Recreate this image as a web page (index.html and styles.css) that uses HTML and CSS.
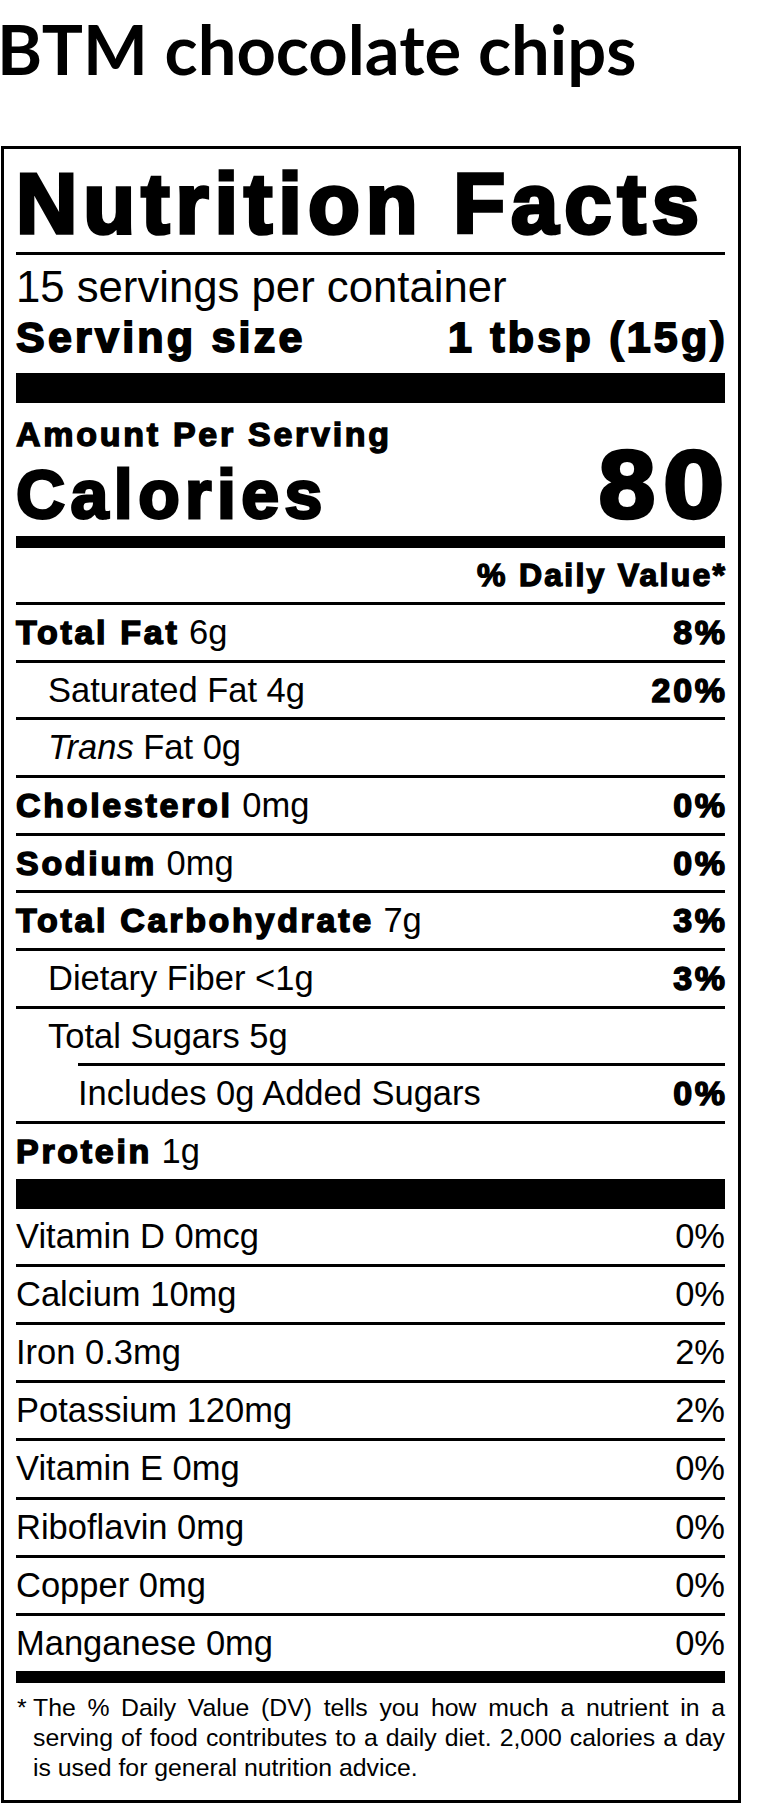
FILE: index.html
```html
<!DOCTYPE html>
<html lang="en">
<head>
<meta charset="utf-8">
<title>BTM chocolate chips</title>
<link rel="stylesheet" href="styles.css">
</head>
<body>
<h1 class="title">BTM chocolate chips</h1>
<section class="label">
  <h2 class="nf-title">Nutrition Facts</h2>
  <p class="servings">15 servings per container</p>
  <div class="serving-size"><span>Serving size</span><span class="end">1 tbsp (15g)</span></div>
  <div class="bar bar-thick"></div>
  <p class="amount">Amount Per Serving</p>
  <div class="calories"><span class="cal-label">Calories</span><span class="cal-value">80</span></div>
  <div class="bar bar-mid"></div>
  <p class="dv-head"><span class="end">% Daily Value*</span></p>

  <div class="row"><span><b class="b">Total Fat</b> 6g</span><b class="b pct">8%</b></div>
  <div class="row sub"><span>Saturated Fat 4g</span><b class="b pct">20%</b></div>
  <div class="row sub"><span><i>Trans</i> Fat 0g</span></div>
  <div class="row"><span><b class="b">Cholesterol</b> 0mg</span><b class="b pct">0%</b></div>
  <div class="row"><span><b class="b">Sodium</b> 0mg</span><b class="b pct">0%</b></div>
  <div class="row"><span><b class="b">Total Carbohydrate</b> 7g</span><b class="b pct">3%</b></div>
  <div class="row sub"><span>Dietary Fiber &lt;1g</span><b class="b pct">3%</b></div>
  <div class="row sub"><span>Total Sugars 5g</span></div>
  <div class="row subsub"><span>Includes 0g Added Sugars</span><b class="b pct">0%</b></div>
  <div class="row"><span><b class="b">Protein</b> 1g</span></div>
  <div class="bar bar-thick"></div>

  <div class="vrow"><span>Vitamin D 0mcg</span><span>0%</span></div>
  <div class="vrow"><span>Calcium 10mg</span><span>0%</span></div>
  <div class="vrow"><span>Iron 0.3mg</span><span>2%</span></div>
  <div class="vrow"><span>Potassium 120mg</span><span>2%</span></div>
  <div class="vrow"><span>Vitamin E 0mg</span><span>0%</span></div>
  <div class="vrow"><span>Riboflavin 0mg</span><span>0%</span></div>
  <div class="vrow"><span>Copper 0mg</span><span>0%</span></div>
  <div class="vrow"><span>Manganese 0mg</span><span>0%</span></div>
  <div class="bar bar-mid"></div>

  <div class="foot">
    <span class="star">*</span>
    <p class="foot-text">The % Daily Value (DV) tells you how much a nutrient in a serving of food contributes to a daily diet. 2,000 calories a day is used for general nutrition advice.</p>
  </div>
</section>
</body>
</html>
```

FILE: styles.css
```css
body {
  margin: 0;
  background: #fff;
  color: #000;
}

.title {
  font-family: Lato, "Liberation Sans", sans-serif;
  font-weight: 700;
  font-size: 68.7px;
  line-height: 84px;
  margin: 7px 0 55px 0;
  text-indent: -3px;
}

.label {
  margin-left: 1px;
  width: 740px;
  box-sizing: border-box;
  border: 3px solid #000;
  padding: 0 13px 0 12px;
  font-family: "Liberation Sans", Arial, sans-serif;
}

.label p { margin: 0; }

.nf-title {
  margin: 0;
  padding-top: 6px;
  font-size: 85px;
  line-height: 97px;
  font-weight: 700;
  letter-spacing: 0.07em;
  -webkit-text-stroke: 3.6px #000;
  border-bottom: 3px solid #000;
  white-space: nowrap;
}

.servings {
  font-size: 43.7px;
  line-height: 48px;
  padding-top: 8px;
}

.serving-size {
  display: flex;
  justify-content: space-between;
  font-size: 43px;
  line-height: 52px;
  font-weight: 700;
  letter-spacing: 0.075em;
  -webkit-text-stroke: 1.8px #000;
}

.end { margin-right: -0.07em; }

.bar { background: #000; }
.bar-thick { height: 30px; margin-top: 10px; }
.row + .bar-thick { margin-top: 0; }
.bar-mid { height: 12px; }

.amount {
  padding-top: 13px;
  font-size: 34px;
  line-height: 36px;
  font-weight: 700;
  letter-spacing: 0.08em;
  -webkit-text-stroke: 1.4px #000;
}

.calories {
  display: flex;
  justify-content: space-between;
  align-items: baseline;
  height: 84px;
}

.cal-label {
  font-size: 68px;
  line-height: 68px;
  font-weight: 700;
  letter-spacing: 0.08em;
  -webkit-text-stroke: 2.8px #000;
}

.cal-value {
  font-family: "DejaVu Sans", "Liberation Sans", sans-serif;
  font-size: 90px;
  line-height: 70px;
  font-weight: 700;
  letter-spacing: 4px;
  margin-right: -4px;
  -webkit-text-stroke: 2.4px #000;
}

.dv-head {
  height: 54px;
  font-size: 32px;
  line-height: 54px;
  text-align: right;
  font-weight: 700;
  letter-spacing: 0.07em;
  -webkit-text-stroke: 1.4px #000;
}

.row,
.vrow {
  display: flex;
  justify-content: space-between;
  font-size: 34.5px;
  border-top: 3px solid #000;
  white-space: nowrap;
}

.row {
  height: 54.67px;
  line-height: 54.67px;
}

.vrow {
  height: 55.2px;
  line-height: 55.2px;
}

.bar-thick + .vrow { border-top: 0; }

.sub { padding-left: 32px; }
.subsub { margin-left: 62px; }

.b {
  font-weight: 700;
  font-size: 34px;
  letter-spacing: 2.7px;
  -webkit-text-stroke: 1.5px #000;
}

.pct { margin-right: -2.7px; }

.foot {
  display: flex;
  padding: 10px 0 17px 1px;
  font-size: 24.8px;
  line-height: 30px;
}

.star {
  width: 16px;
  flex: none;
}

.foot-text {
  flex: 1;
  text-align: justify;
}
```
